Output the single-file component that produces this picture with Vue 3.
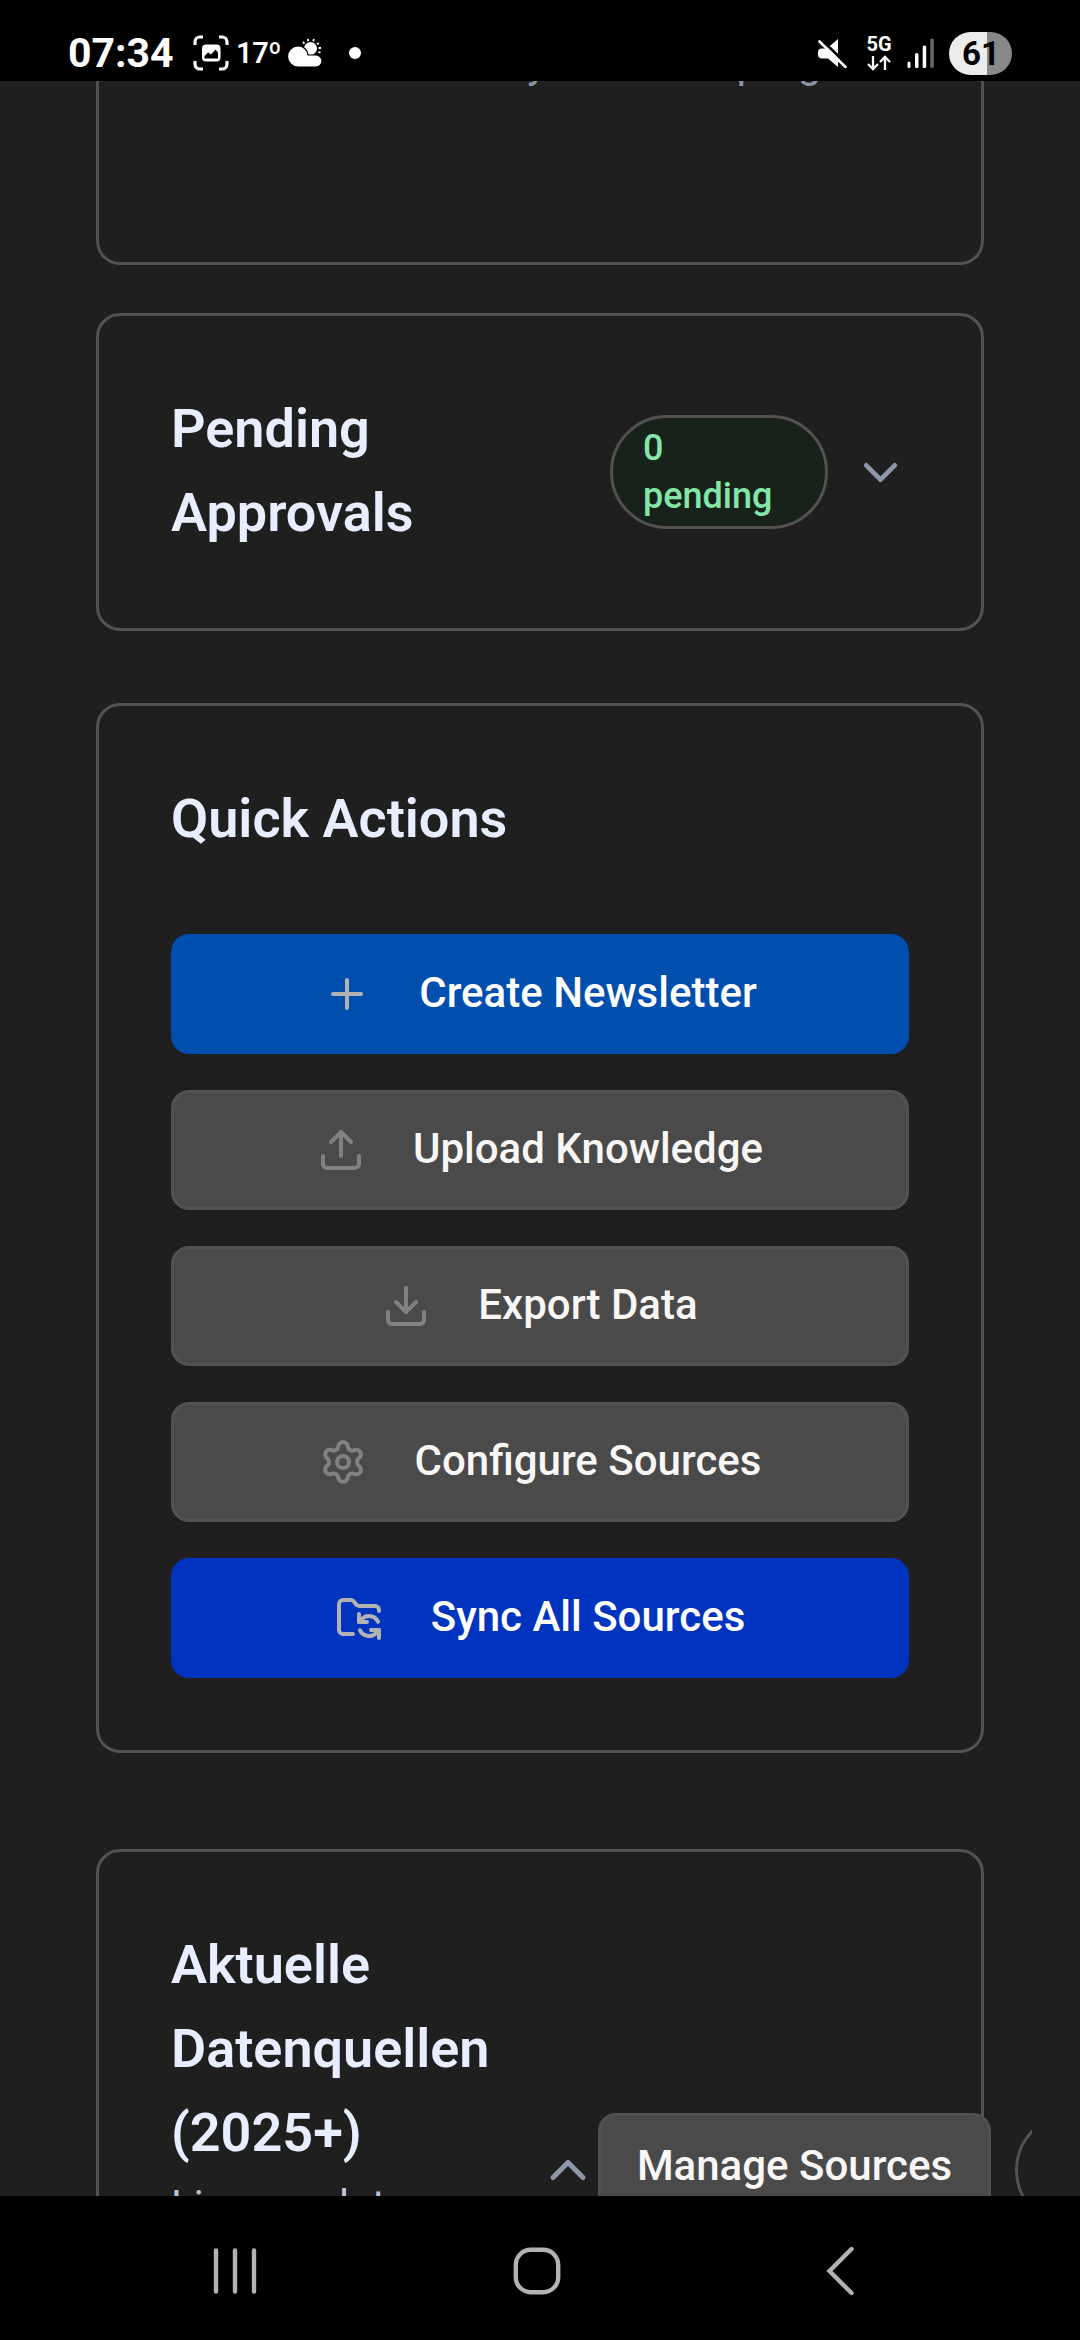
<script setup>
const actions = [
  { label: 'Create Newsletter', kind: 'primary', paths: ['M5 12h14', 'M12 5v14'] },
  {
    label: 'Upload Knowledge',
    kind: 'neutral',
    paths: ['M12 3v12', 'm17 8-5-5-5 5', 'M21 15v4a2 2 0 0 1-2 2H5a2 2 0 0 1-2-2v-4'],
  },
  {
    label: 'Export Data',
    kind: 'neutral',
    paths: ['M12 15V3', 'm7 10 5 5 5-5', 'M21 15v4a2 2 0 0 1-2 2H5a2 2 0 0 1-2-2v-4'],
  },
  {
    label: 'Configure Sources',
    kind: 'neutral',
    paths: [
      'M9.671 4.136a2.34 2.34 0 0 1 4.659 0 2.34 2.34 0 0 0 3.319 1.915 2.34 2.34 0 0 1 2.33 4.033 2.34 2.34 0 0 0 0 3.831 2.34 2.34 0 0 1-2.33 4.033 2.34 2.34 0 0 0-3.319 1.915 2.34 2.34 0 0 1-4.659 0 2.34 2.34 0 0 0-3.32-1.915 2.34 2.34 0 0 1-2.33-4.033 2.34 2.34 0 0 0 0-3.831A2.34 2.34 0 0 1 6.35 6.051a2.34 2.34 0 0 0 3.319-1.915',
      'M9 12a3 3 0 1 0 6 0a3 3 0 1 0-6 0',
    ],
  },
  {
    label: 'Sync All Sources',
    kind: 'sync',
    paths: [
      'M9 20H4a2 2 0 0 1-2-2V5a2 2 0 0 1 2-2h3.9a2 2 0 0 1 1.69.9l.81 1.2a2 2 0 0 0 1.67.9H20a2 2 0 0 1 2 2v.5',
      'M12 10v4h4',
      'm12 14 1.535-1.605a5 5 0 0 1 8 1.5',
      'M22 22v-4h-4',
      'm22 18-1.535 1.605a5 5 0 0 1-8-1.5',
    ],
  },
]
</script>

<template>
  <div class="phone">
    <header class="status">
      <div class="status-left">
        <span class="time">07:34</span>
        <svg class="capture" width="36" height="36" viewBox="0 0 36 36" fill="none">
          <path
            d="M2 10V7a5 5 0 0 1 5-5h3M26 2h3a5 5 0 0 1 5 5v3M34 26v3a5 5 0 0 1-5 5h-3M10 34H7a5 5 0 0 1-5-5v-3"
            stroke="#fff"
            stroke-width="3.2"
          />
          <rect x="9" y="9.500" width="18.500" height="17" rx="4" fill="#fff" />
          <path d="M11.500 23.500v-2.500l3.500-3.500 3 2 4.500-5 2.500 3v6z" fill="#000" />
        </svg>
        <span class="temp">17º</span>
        <svg class="weather" width="34" height="30" viewBox="0 0 34 30">
          <circle cx="22.500" cy="10.500" r="6.500" fill="#fff" />
          <g stroke="#fff" stroke-width="1.800">
            <path d="M20.300 3.200l-.6-2.200M25.200 3.200l.7-2.200M16.500 5.600l-1.600-1.600M29 6.400l1.800-1.500M30.500 10h2.500M30.300 14l2.200.6" />
          </g>
          <path
            d="M10 8a10 10 0 0 1 10 9h8a6 6 0 0 1 0 12H10A10.500 10.500 0 0 1 10 8z"
            fill="#fff"
            stroke="#000"
            stroke-width="1.200"
          />
        </svg>
        <i class="dot"></i>
      </div>
      <div class="status-right">
        <svg class="mute" width="30" height="30" viewBox="0 0 30 30">
          <path d="M5 10.500h5L21 1v28l-10-8.500H5a4 4 0 0 1-4-4v-2a4 4 0 0 1 4-4z" fill="#fff" />
          <path d="M2.500 0 30.500 27" stroke="#000" stroke-width="3" />
          <path d="M2.500 3.500 28.500 29" stroke="#fff" stroke-width="2.600" stroke-linecap="round" />
        </svg>
        <div class="network">
          <span>5G</span>
          <svg width="24" height="16" viewBox="0 0 24 16" fill="none" stroke="#fff" stroke-width="2.300">
            <path d="M6 1v13M1 9l5 5 5-5M18 15V2M13 7l5-5 5 5" />
          </svg>
        </div>
        <svg class="signal" width="28" height="30" viewBox="0 0 28 30" fill="#fff">
          <rect x="0.500" y="23.500" width="3" height="6.500" rx="1.500" />
          <rect x="8" y="15" width="3.500" height="15" rx="1.500" />
          <rect x="15.700" y="7.500" width="3.500" height="22.500" rx="1.500" />
          <rect x="23.300" y="0.500" width="3.500" height="29.500" rx="1.500" fill="#666" />
        </svg>
        <span class="battery">61</span>
      </div>
    </header>

    <main class="viewport">
      <div class="content">
        <section class="card card-cut">
          <p class="empty">There are currently drafts in progress</p>
        </section>

        <section class="card approvals">
          <h2>Pending Approvals</h2>
          <span class="badge">0 pending</span>
          <svg class="chevron" width="57" height="57" viewBox="0 0 24 24">
            <path d="m6 9 6 6 6-6" />
          </svg>
        </section>

        <section class="card quick">
          <h2>Quick Actions</h2>
          <div class="actions">
            <button v-for="a in actions" :key="a.label" class="btn action" :class="a.kind">
              <svg class="icon" width="48" height="48" viewBox="0 0 24 24">
                <path v-for="p in a.paths" :key="p" :d="p" />
              </svg>
              <span>{{ a.label }}</span>
            </button>
          </div>
        </section>

        <section class="card sources">
          <div class="sources-text">
            <h2>Aktuelle Datenquellen (2025+)</h2>
            <p>Live - updates</p>
          </div>
          <div class="sources-tools">
            <svg class="chevron" width="60" height="60" viewBox="0 0 24 24">
              <path d="m18 15-6-6-6 6" />
            </svg>
            <button class="btn neutral manage">Manage Sources</button>
            <span class="badge-empty"></span>
          </div>
        </section>
      </div>
    </main>

    <nav class="navbar">
      <svg width="46" height="50" viewBox="0 0 46 50">
        <path d="M4 4.500v41M23 4.500v41M42 4.500v41" />
      </svg>
      <svg class="home" width="50" height="50" viewBox="0 0 50 50">
        <rect x="3.800" y="3.800" width="42.400" height="42.400" rx="15" />
      </svg>
      <svg width="30" height="50" viewBox="0 0 30 50">
        <path d="M26.500 3 4.500 25l22 22" />
      </svg>
    </nav>
  </div>
</template>

<style>
body {
  background: #000;
}
</style>

<style scoped>
.phone {
  width: 1080px;
  height: 2340px;
  display: flex;
  flex-direction: column;
  overflow: hidden;
  background: #000;
  font-family: Roboto, 'Liberation Sans', sans-serif;
}

.status {
  flex: 0 0 81px;
  box-sizing: border-box;
  padding: 26px 68px 0 68px;
  display: flex;
  justify-content: space-between;
  align-items: flex-start;
  color: #fff;
}

.status-left,
.status-right {
  height: 54px;
  display: flex;
  align-items: center;
}

.time {
  width: 125px;
  font-size: 41px;
  line-height: 42px;
  font-weight: 700;
}

.temp {
  width: 52px;
  margin-left: 7px;
  font-size: 29px;
  line-height: 32px;
  font-weight: 600;
  letter-spacing: -0.4px;
}

.dot {
  width: 12px;
  height: 12px;
  margin-left: 27px;
  border-radius: 50%;
  background: #fff;
}

.network {
  width: 26px;
  margin-left: 19px;
  display: flex;
  flex-direction: column;
  align-items: center;
  gap: 3px;
  font-size: 20px;
  line-height: 16px;
  font-weight: 700;
}

.signal {
  margin-left: 15px;
}

.battery {
  box-sizing: border-box;
  width: 63px;
  height: 43px;
  margin-left: 14px;
  padding-left: 1px;
  border-radius: 22px;
  background: linear-gradient(90deg, #ececec 38px, #888 38px);
  color: #000;
  font-size: 33px;
  line-height: 43px;
  font-weight: 700;
  text-align: center;
}

.viewport {
  flex: 1;
  min-height: 0;
  overflow: hidden;
  background: #1d1f21;
}

.content {
  height: 100%;
  box-sizing: border-box;
  margin: 0 48px;
  padding: 0 48px;
  overflow: hidden;
}

.card {
  box-sizing: border-box;
  padding: 72px;
  border: 3px solid #535250;
  border-radius: 24px;
  background: #1f1f1f;
}

p {
  margin: 0;
}

h2 {
  margin: -1px 0 1px;
  color: #e8eeff;
  font-size: 54px;
  line-height: 84px;
  font-weight: 600;
}

.card-cut {
  height: 184px;
  padding: 0 72px 168px 89px;
  border-top: 0;
  border-radius: 0 0 24px 24px;
  display: flex;
  align-items: flex-end;
}

.empty {
  flex: none;
  color: #8b94a3;
  font-size: 42px;
  line-height: 63px;
  word-spacing: 5px;
}

.approvals {
  height: 318px;
  margin-top: 48px;
  display: flex;
  align-items: center;
}

.approvals h2 {
  width: 300px;
  margin-right: auto;
}

.badge {
  box-sizing: border-box;
  width: 218px;
  padding: 6px 50px 6px 30px;
  border: 3px solid #535250;
  border-radius: 57px;
  background: #17221b;
  color: #84e6a8;
  font-size: 36px;
  line-height: 48px;
  font-weight: 500;
}

.chevron {
  flex: none;
  fill: none;
  stroke: #8f98a8;
  stroke-width: 2;
  stroke-linecap: round;
  stroke-linejoin: round;
}

.approvals .chevron {
  margin-left: 24px;
}

.quick {
  margin-top: 72px;
}

.quick h2 {
  margin-bottom: 73px;
}

.actions {
  display: flex;
  flex-direction: column;
  gap: 36px;
}

.btn {
  box-sizing: border-box;
  border: 3px solid transparent;
  border-radius: 18px;
  font-family: inherit;
  font-size: 42px;
  line-height: 60px;
  font-weight: 500;
  white-space: nowrap;
}

.action {
  height: 120px;
  padding: 0 0 3px;
  display: flex;
  align-items: center;
  justify-content: center;
  gap: 48px;
}

.icon {
  margin-top: 3px;
  fill: none;
  stroke: #b0b2b4;
  stroke-width: 2;
  stroke-linecap: round;
  stroke-linejoin: round;
}

.primary {
  background: #004eae;
  border-color: #004eae;
  color: #fff;
}

.sync {
  background: #0034bf;
  border-color: #0034bf;
  color: #fff;
}

.neutral {
  background: #4a4a4a;
  border-color: #525150;
  color: #f9f7f5;
}

.neutral .icon {
  stroke: #82817f;
}

.sources {
  height: 642px;
  margin-top: 96px;
  display: flex;
  align-items: center;
  gap: 24px;
}

.sources-text {
  flex: 0 0 343px;
}

.sources-text p {
  height: 240px;
  color: #bcc6d6;
  font-size: 42px;
  line-height: 60px;
}

.sources-tools {
  flex: none;
  display: flex;
  align-items: center;
}

.manage {
  width: 393px;
  height: 114px;
  padding: 0 0 8px;
  text-align: center;
}

.badge-empty {
  box-sizing: border-box;
  width: 218px;
  height: 114px;
  margin-left: 24px;
  border: 3px solid #535250;
  border-radius: 57px;
}

.navbar {
  flex: 0 0 144px;
  box-sizing: border-box;
  padding: 6px 225px 0 212px;
  display: flex;
  align-items: center;
}

.navbar svg {
  fill: none;
  stroke: #b2b2b2;
  stroke-width: 4.4;
  stroke-linecap: round;
  stroke-linejoin: miter;
}

.navbar .home {
  margin: 0 auto 0 254px;
}
</style>
